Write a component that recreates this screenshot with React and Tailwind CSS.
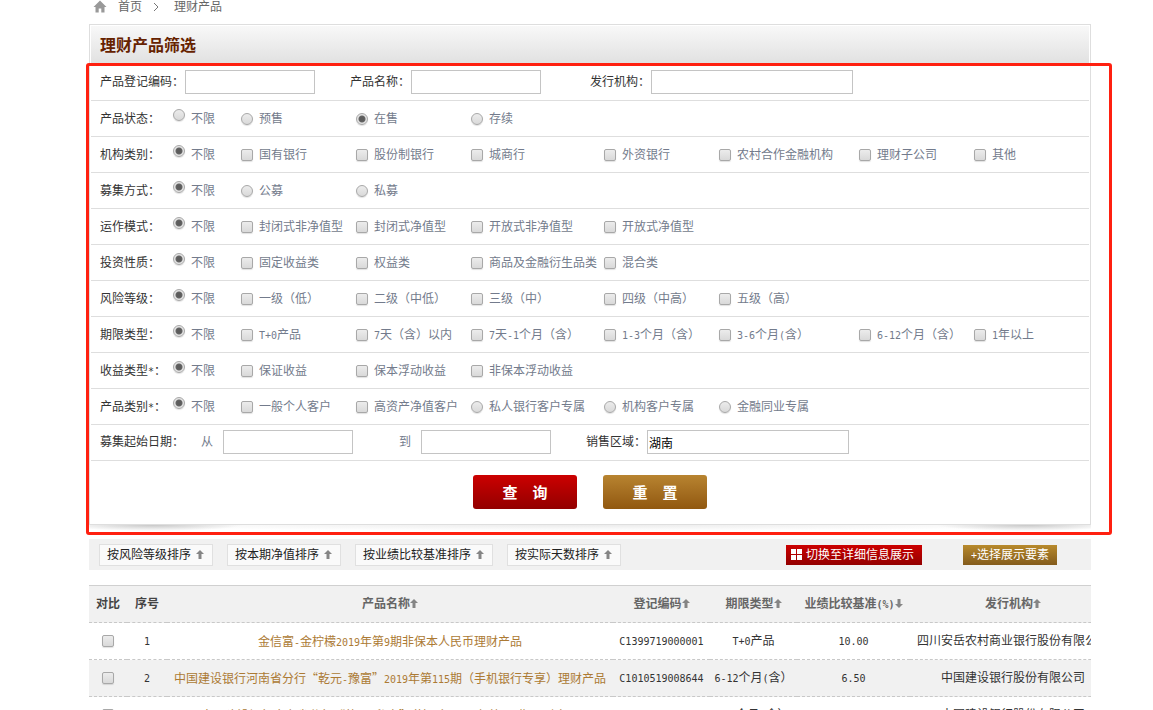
import React from 'react';

const FILTERS = [
  { label: '产品状态：', name: 'status', noLimit: false, items: [
    { t: '预售', radio: true }, { t: '在售', radio: true, on: true }, { t: '存续', radio: true },
  ] },
  { label: '机构类别：', name: 'orgType', noLimit: true, items: [
    { t: '国有银行' }, { t: '股份制银行' }, { t: '城商行' }, { t: '外资银行' }, { t: '农村合作金融机构' }, { t: '理财子公司' }, { t: '其他' },
  ] },
  { label: '募集方式：', name: 'raise', noLimit: true, items: [
    { t: '公募', radio: true }, { t: '私募', radio: true },
  ] },
  { label: '运作模式：', name: 'mode', noLimit: true, items: [
    { t: '封闭式非净值型' }, { t: '封闭式净值型' }, { t: '开放式非净值型' }, { t: '开放式净值型' },
  ] },
  { label: '投资性质：', name: 'nature', noLimit: true, items: [
    { t: '固定收益类' }, { t: '权益类' }, { t: '商品及金融衍生品类' }, { t: '混合类' },
  ] },
  { label: '风险等级：', name: 'risk', noLimit: true, items: [
    { t: '一级（低）' }, { t: '二级（中低）' }, { t: '三级（中）' }, { t: '四级（中高）' }, { t: '五级（高）' },
  ] },
  { label: '期限类型：', name: 'term', noLimit: true, items: [
    { t: 'T+0产品' }, { t: '7天（含）以内' }, { t: '7天-1个月（含）' }, { t: '1-3个月（含）' }, { t: '3-6个月(含）' }, { t: '6-12个月（含）' }, { t: '1年以上' },
  ] },
  { label: '收益类型*：', name: 'income', noLimit: true, items: [
    { t: '保证收益' }, { t: '保本浮动收益' }, { t: '非保本浮动收益' },
  ] },
  { label: '产品类别*：', name: 'category', noLimit: true, items: [
    { t: '一般个人客户' }, { t: '高资产净值客户' }, { t: '私人银行客户专属', radio: true }, { t: '机构客户专属', radio: true }, { t: '金融同业专属', radio: true },
  ] },
];

const SORTS = ['按风险等级排序', '按本期净值排序', '按业绩比较基准排序', '按实际天数排序'];

const COLUMNS = [
  { t: '产品名称', arrow: 'up' },
  { t: '登记编码', arrow: 'up' },
  { t: '期限类型', arrow: 'up' },
  { t: '业绩比较基准(%)', arrow: 'down' },
  { t: '发行机构', arrow: 'up' },
];

const PRODUCTS = [
  { id: 1, name: '金信富-金柠檬2019年第9期非保本人民币理财产品', code: 'C1399719000001', term: 'T+0产品', rate: '10.00', org: '四川安岳农村商业银行股份有限公司' },
  { id: 2, name: '中国建设银行河南省分行“乾元-豫富”2019年第115期（手机银行专享）理财产品', code: 'C1010519008644', term: '6-12个月(含）', rate: '6.50', org: '中国建设银行股份有限公司' },
  { id: 3, name: '中国建设银行广东省分行“乾元-私享”（按日）2019年第114期理财产品', code: 'C1010519008643', term: '1-3个月(含）', rate: '6.00', org: '中国建设银行股份有限公司' },
];

// Latin runs are set in a half-width monospace beside the full-width characters
const Mixed = ({ text }) =>
  String(text).split(/([\x21-\x7e]+)/).map((part, i) =>
    i % 2 ? <span key={i} className="font-['DejaVu_Sans_Mono',monospace] text-[10px]">{part}</span> : part
  );

const Arrow = ({ down }) => (
  <svg viewBox="0 0 8 9" className={`inline-block align-baseline w-2 h-[9px] shrink-0 ${down ? 'rotate-180' : ''}`} aria-hidden="true">
    <path d="M4 0 L8 4 H5.5 V9 H2.5 V4 H0 Z" fill="#858585" />
  </svg>
);

const HomeIcon = () => (
  <svg viewBox="0 0 14 13" className="w-[14px] h-[13px]" aria-hidden="true">
    <path d="M7 0.5 L13.5 7 H11.5 V12.5 H8.3 V8.5 H5.7 V12.5 H2.5 V7 H0.5 Z" fill="#999" />
  </svg>
);

const BOX = 'appearance-none shrink-0 w-3 h-3 border border-[#a8a8a8] bg-linear-to-b from-[#ececec] to-[#d9d9d9] shadow-[0_1px_1px_rgba(0,0,0,0.12)]';

const Check = (props) => <input type="checkbox" className={`${BOX} rounded-[2px]`} {...props} />;

const Radio = (props) => (
  <input
    type="radio"
    className={`${BOX} rounded-full checked:bg-[radial-gradient(circle,#5c5c5c_0_2px,#666_3px,#e4e4e4_4px)]`}
    {...props}
  />
);

const Option = ({ name, item }) => (
  <label className="flex items-center gap-1.5 whitespace-nowrap">
    {item.radio ? <Radio name={name} defaultChecked={item.on} /> : <Check name={name} />}
    <span><Mixed text={item.t} /></span>
  </label>
);

const FilterRow = ({ row }) => (
  <div className="grid grid-cols-[73px_68px_115px_115px_133px_115px_140px_115px_1fr] items-center h-9 pl-[9px] border-b border-[#dedede]">
    <span className="text-[#333] whitespace-nowrap"><Mixed text={row.label} /></span>
    <label className="flex items-center gap-1.5 whitespace-nowrap">
      <span className="flex pb-2">
        <Radio name={row.name} defaultChecked={row.noLimit} />
      </span>
      不限
    </label>
    {row.items.map((item) => (
      <Option key={item.t} name={row.name} item={item} />
    ))}
  </div>
);

const Field = ({ id, label, wide, muted, value }) => (
  <div className={`flex items-center ${muted ? 'gap-2.5' : 'gap-px'}`}>
    <label htmlFor={id} className={`whitespace-nowrap ${muted ? '' : 'text-[#333]'}`}>{label}</label>
    <input
      id={id}
      type="text"
      defaultValue={value}
      className={`h-6 border border-[#c4c4c4] bg-white pl-px text-black ${wide ? 'w-[202px]' : 'w-[130px]'}`}
    />
  </div>
);

const App = () => (
  <div
    lang="zh-CN"
    className="h-screen overflow-hidden bg-white pl-[89px] pr-[62px] text-xs text-[#737b8c] font-['Liberation_Sans','Noto_Sans_CJK_SC',sans-serif]"
  >
    <nav className="flex items-center h-[13px] mb-[11px] pl-1 text-[#666]">
      <HomeIcon />
      <a href="#home" className="ml-[11px]">首页</a>
      <svg viewBox="0 0 6 10" className="w-1.5 h-2.5 ml-[11px] mr-[15px]" aria-hidden="true">
        <path d="M1 1 L5 5 L1 9" fill="none" stroke="#777" />
      </svg>
      <a href="#products">理财产品</a>
    </nav>

    <section className="relative">
      <div className="border border-[#dedede] p-px pb-0">
        <h1 className="flex items-center h-[39px] pl-[9px] bg-linear-to-b from-[#f8f8f8] to-[#e0e0e0] text-base font-bold text-[#662200]">
          理财产品筛选
        </h1>
        <form onSubmit={(e) => e.preventDefault()}>
          <div className="flex items-center h-9 pl-[9px] pb-px border-b border-[#dedede]">
            <Field id="code" label="产品登记编码：" />
            <div className="ml-[35px]"><Field id="pname" label="产品名称：" /></div>
            <div className="ml-[49px]"><Field id="issuer" label="发行机构：" wide /></div>
          </div>
          {FILTERS.map((row) => <FilterRow key={row.name} row={row} />)}
          <div className="flex items-center h-9 pl-[9px] pb-px border-b border-[#dedede]">
            <span className="text-[#333] mr-[17px]">募集起始日期：</span>
            <Field id="from" label="从" muted />
            <div className="ml-[46px]"><Field id="to" label="到" muted /></div>
            <div className="ml-[35px]"><Field id="area" label="销售区域：" wide value="湖南" /></div>
          </div>
          <div className="flex justify-center gap-[26px] pt-3.5 pb-[15px] text-white text-[15px] font-bold">
            <button type="submit" className="w-[104px] h-[34px] pt-0.5 rounded-[3px] bg-linear-to-b from-[#cc0000] to-[#930000] whitespace-pre">查　询</button>
            <button type="reset" className="w-[104px] h-[34px] pt-0.5 rounded-[3px] bg-linear-to-b from-[#b88430] to-[#91580f] whitespace-pre">重　置</button>
          </div>
        </form>
      </div>
      <div className="absolute top-full inset-x-0 h-2 bg-[radial-gradient(ellipse_90px_6px_at_64px_0,#c8c8c8,transparent),radial-gradient(ellipse_90px_6px_at_calc(100%-64px)_0,#c8c8c8,transparent),radial-gradient(ellipse_50%_6px_at_50%_0,#ececec,transparent)]" />
      <div className="absolute top-[39px] -left-[3px] -right-[21px] -bottom-2.5 border-3 border-[#ff2010] rounded-[3px] pointer-events-none" />
    </section>

    <div className="flex items-center h-[31px] mt-3.5 pl-2.5 pr-[34px] bg-[#f1f1f1]">
      <div className="flex gap-3.5">
        {SORTS.map((s) => (
          <button key={s} className="flex items-center gap-[5px] h-[22px] pl-[7px] pr-2 border border-[#e0e0e0] bg-[#fafafa] text-[#222] whitespace-nowrap">
            {s}
            <Arrow />
          </button>
        ))}
      </div>
      <div className="flex gap-[41px] ml-auto text-white">
        <button className="flex items-center gap-1 h-5 pl-[5px] pr-2 bg-linear-to-b from-[#cc0000] to-[#930000] whitespace-nowrap">
          <svg viewBox="0 0 11 11" className="w-[11px] h-[11px]" fill="#fff" aria-hidden="true">
            <path d="M0 0h5v5H0z M6 0h5v5H6z M0 6h5v5H0z M6 6h5v5H6z" />
          </svg>
          切换至详细信息展示
        </button>
        <button className="h-5 w-[94px] bg-linear-to-b from-[#b88a2c] to-[#835b1c] whitespace-nowrap"><Mixed text="+选择展示要素" /></button>
      </div>
    </div>

    <div className="mt-[15px] overflow-hidden">
      <table className="table-fixed w-[calc(100%+25px)] border-t border-[#d0d0d0] text-center whitespace-nowrap">
        <colgroup>
          <col className="w-[38px]" />
          <col className="w-10" />
          <col />
          <col className="w-[97px]" />
          <col className="w-[87px]" />
          <col className="w-[113px]" />
          <col className="w-[206px]" />
        </colgroup>
        <thead>
          <tr className="h-[37px] bg-[#f1f1f1] border-b border-dashed border-[#c8c8c8] text-[#666]">
            <th className="text-[#444]">对比</th>
            <th className="text-[#444]">序号</th>
            {COLUMNS.map((c) => (
              <th key={c.t}>
                <Mixed text={c.t} />
                <Arrow down={c.arrow === 'down'} />
              </th>
            ))}
          </tr>
        </thead>
        <tbody className="text-[#333]">
          {PRODUCTS.map((p) => (
            <tr key={p.id} className="h-[37px] border-b border-dashed border-[#c8c8c8] even:bg-[#f1f1f1]">
              <td>
                <label className="flex justify-center"><Check aria-label={`对比 ${p.id}`} /></label>
              </td>
              <td><Mixed text={p.id} /></td>
              <td>
                <a href={`#p${p.id}`} className="text-[#ac7a34] font-['Noto_Sans_CJK_SC',sans-serif]"><Mixed text={p.name} /></a>
              </td>
              <td><Mixed text={p.code} /></td>
              <td><Mixed text={p.term} /></td>
              <td><Mixed text={p.rate} /></td>
              <td>{p.org}</td>
            </tr>
          ))}
        </tbody>
      </table>
    </div>
  </div>
);

export default App;
